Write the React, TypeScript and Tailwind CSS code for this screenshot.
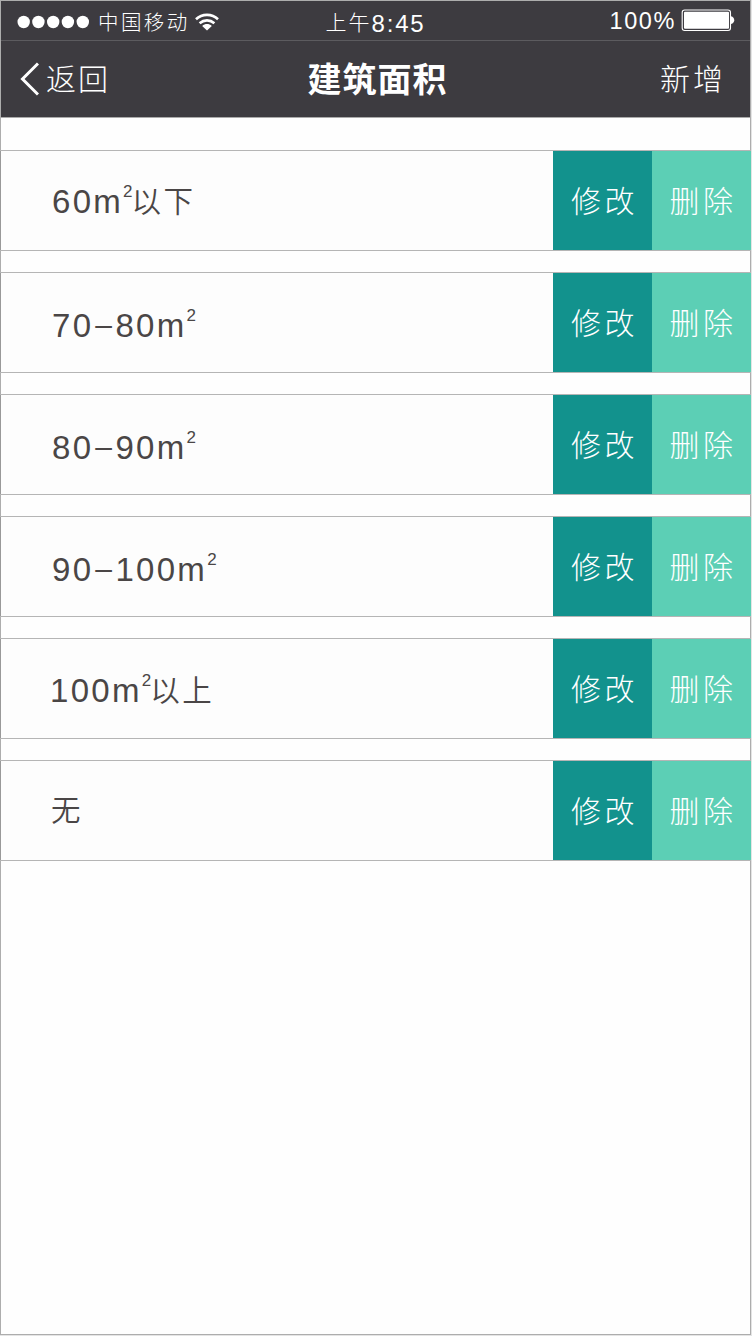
import React from "react";

type Row = { from?: string; value: string; suffix?: string; squared: boolean; pad: string };

const rows: Row[] = [
  { value: "60m", suffix: "以下", squared: true, pad: "pt-[2px] pl-[51px]" },
  { from: "70", value: "80m", squared: true, pad: "pt-[7px] pl-[51px]" },
  { from: "80", value: "90m", squared: true, pad: "pt-[7px] pl-[51px]" },
  { from: "90", value: "100m", squared: true, pad: "pt-[7px] pl-[51px]" },
  { value: "100m", suffix: "以上", squared: true, pad: "pt-[4px] pl-[49px]" },
  { value: "", suffix: "无", squared: false, pad: "pt-px pl-[51px]" },
];

function Wifi() {
  return (
    <svg width="24" height="18" viewBox="0 0 24 18" fill="none" stroke="#fff" strokeWidth="2.6">
      <path d="M1 6.2C7 .4 17 .4 23 6.2" />
      <path d="M4.6 10.2C9 6.4 15 6.4 19.4 10.2" />
      <path d="M12 17.5L7.2 13C10 10.4 14 10.4 16.8 13Z" fill="#fff" stroke="none" />
    </svg>
  );
}

function Battery() {
  return (
    <svg width="54" height="23" viewBox="0 0 54 23">
      <rect x="1.2" y="1" width="48.3" height="20.5" rx="2.5" fill="none" stroke="#fff" strokeWidth="1.1" />
      <rect x="3" y="2.8" width="45" height="17" rx="1" fill="#fff" />
      <path d="M50 7.3C54.3 8.3 54.3 14 50 15Z" fill="#fff" />
    </svg>
  );
}

function StatusBar() {
  return (
    <div className="grid h-10 grid-cols-3 border-b border-[#5c5b5f] text-white">
      <div className="flex items-center pt-[3px] pl-4">
        <svg width="74" height="14" viewBox="0 0 74 14" fill="#fff">
          {[6.7, 21.4, 36.2, 50.9, 65.8].map((x) => (
            <circle key={x} cx={x} cy="7" r="6.2" />
          ))}
        </svg>
        <span className="mt-[2px] ml-[7px] text-[20.5px] leading-6 tracking-[2.4px] whitespace-nowrap">中国移动</span>
        <span className="ml-[5px]"><Wifi /></span>
      </div>
      <div className="flex items-center justify-center pt-[5px] whitespace-nowrap">
        <span className="text-[21px] leading-6 tracking-[2px]">上午</span>
        <span className="mt-px text-[24px] leading-6 tracking-[1.8px]">8:45</span>
      </div>
      <div className="flex items-center justify-end pr-[15px]">
        <span className="text-[23.5px] leading-6 tracking-[1.6px]">100%</span>
        <span className="ml-[5px]"><Battery /></span>
      </div>
    </div>
  );
}

function ListRow({ row }: { row: Row }) {
  return (
    <li className="flex h-[101px] border-y border-[#b5b5b5] bg-[#fdfdfd]">
      <div className={`flex flex-1 items-center border-l border-[#999] text-[#4a4646] ${row.pad}`}>
        {row.from && (
          <>
            <span className="text-[33px] leading-10 tracking-[2.5px]">{row.from}</span>
            <span className="-mt-[3px] ml-[1.5px] text-[30px] leading-10 tracking-[3.5px]">–</span>
          </>
        )}
        <span className="text-[33px] leading-10 tracking-[2.3px]">{row.value}</span>
        {row.squared && <sup className="-top-[10px] text-[17px] leading-5">2</sup>}
        {row.suffix && (
          <span className="-ml-px text-[29.5px] leading-10 font-[350] tracking-[2.5px]">{row.suffix}</span>
        )}
      </div>
      <button className="w-[99px] bg-[#12928d] pt-px pl-1 text-[30px] tracking-[3.5px] text-white">修改</button>
      <button className="w-[99px] bg-[#5ccfb5] pt-px pl-[3px] text-[30px] tracking-[3.5px] text-white">删除</button>
    </li>
  );
}

export default function App() {
  return (
    <div className="h-[1336px] w-[752px] bg-[#e4e4e4] pr-px pb-px font-['Liberation_Sans','Noto_Sans_CJK_SC',sans-serif] font-light">
      <div className="h-[1335px] border border-[#adadad] bg-[#fefefe]">
        <header className="h-[117px] border-b border-[#aaa] bg-[#3d3b40] text-white">
          <StatusBar />
          <div className="grid h-[76px] grid-cols-3 items-center">
            <button className="flex items-center pl-[19px] text-[30px] leading-10 tracking-[2px]">
              <svg width="19" height="34" viewBox="0 0 19 34" fill="none" stroke="#fff" strokeWidth="3">
                <path d="M18 1.5L2.5 17L18 32.5" />
              </svg>
              <span className="mt-px ml-[7px]">返回</span>
            </button>
            <h1 className="pt-px pl-1 text-center text-[34px] leading-10 font-bold tracking-[1px]">建筑面积</h1>
            <button className="pt-[2px] pr-[24px] text-right text-[30px] leading-10 tracking-[3px]">新增</button>
          </div>
        </header>
        <ul className="-mx-px mt-8 flex flex-col gap-[21px]">
          {rows.map((row) => (
            <ListRow key={`${row.from}-${row.value}${row.suffix}`} row={row} />
          ))}
        </ul>
      </div>
    </div>
  );
}
